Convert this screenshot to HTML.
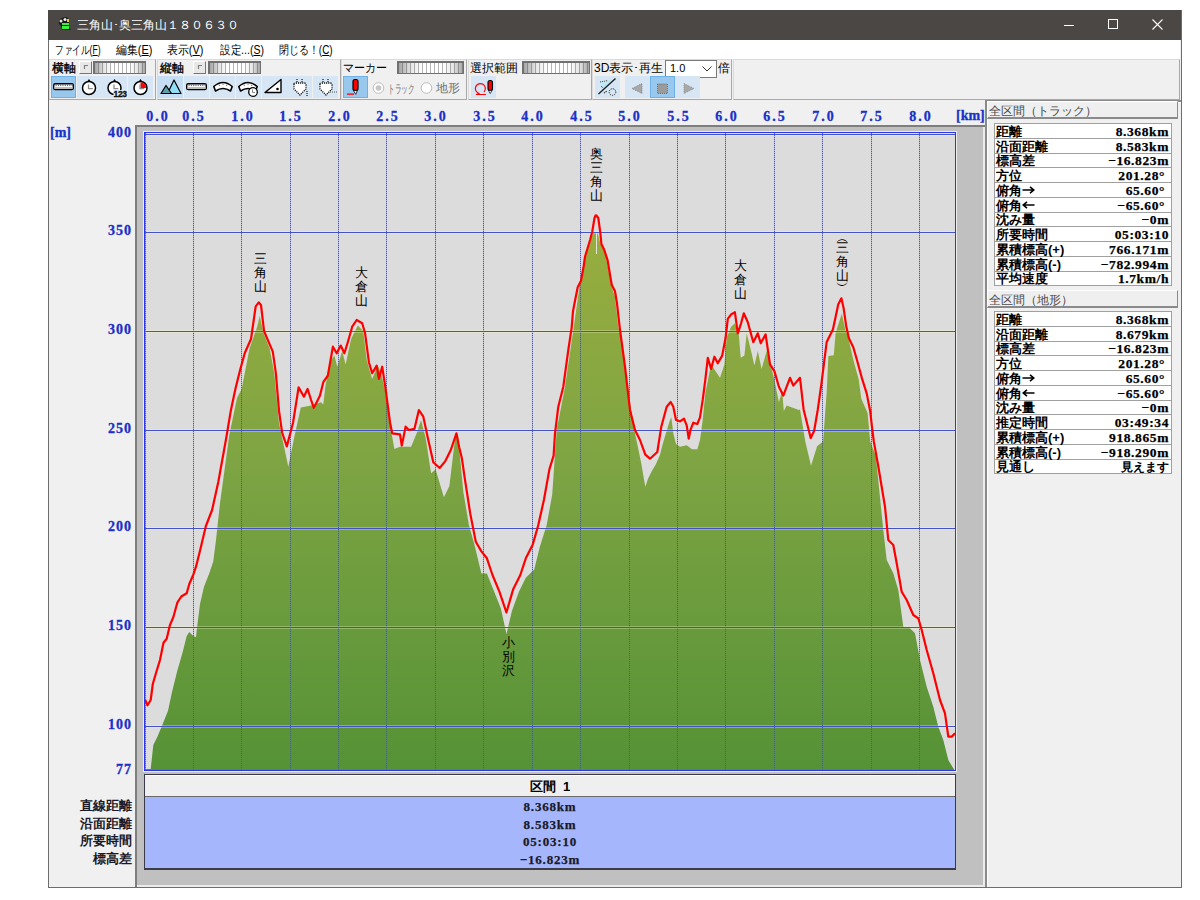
<!DOCTYPE html><html><head><meta charset="utf-8"><style>
*{margin:0;padding:0;box-sizing:border-box}
html,body{width:1200px;height:900px;overflow:hidden;background:#fff}
body{position:relative;font-family:"Liberation Sans",sans-serif;font-size:12px;color:#000}
.a{position:absolute}
.ttl{color:#fff;font-size:12px;white-space:nowrap}
.menu{font-size:12px;white-space:nowrap;color:#000}
.mono{font-family:"Liberation Serif",serif;font-weight:bold;letter-spacing:0.8px;-webkit-text-stroke:0.25px #1a1a2a}
.ax{font-family:"Liberation Serif",serif;font-weight:bold;color:#1a30c8;font-size:14px;letter-spacing:1px;-webkit-text-stroke:0.3px #1a30c8;white-space:nowrap;line-height:14px}
.vt{font-size:13px;line-height:14px;color:#000;white-space:nowrap;text-align:center;width:13px}
.row{position:absolute;left:0;width:177px;height:15px;border-bottom:1px solid #a0a0a0;font-size:13px;line-height:14px;font-weight:bold;white-space:nowrap}
.row .l{position:absolute;left:1px;top:1px}
.row .r{position:absolute;right:3px;top:1px;font-family:"Liberation Serif",serif;font-weight:bold;font-size:13.5px;letter-spacing:0.6px;-webkit-text-stroke:0.25px #000}
.grp{position:absolute;top:59px;height:41px;border:1px solid #dadada;border-bottom-color:#a8a8a8;border-right-color:#a8a8a8}
.btn{position:absolute;top:76px;width:25px;height:22px;background:#d6e6f5}
.sel{background:#99c8ee;border:1px solid #6fb0e6}
.sl{position:absolute;height:13px;border:2px solid #707070;border-bottom-width:1px;border-right-width:1px;background:linear-gradient(90deg,rgba(60,60,60,.45),rgba(60,60,60,.1) 20%,rgba(0,0,0,0) 35%,rgba(0,0,0,0) 70%,rgba(60,60,60,.12) 85%,rgba(60,60,60,.45)),repeating-linear-gradient(90deg,#fdfdfd 0,#fdfdfd 3px,#b4b4b4 3px,#b4b4b4 4px)}
.tlab{position:absolute;top:60px;font-size:12px;white-space:nowrap}
</style></head><body>
<div class="a" style="left:48px;top:10px;width:1134px;height:878px;border:1px solid #6d6d6d;background:#f0f0f0"></div>
<div class="a" style="left:48px;top:10px;width:1133px;height:30px;background:#4a4744"></div>
<div class="a ttl" style="left:77px;top:17px">三角山･奥三角山１８０６３０</div>
<svg class="a" style="left:56px;top:15px" width="18" height="18"><path d="M3 9 Q2 4 6 3 L10 2 L13 4 L13 12 L15 15 L6 15 L5 11 Z" fill="#1a1a1a"/><rect x="6" y="8" width="7" height="2" fill="#3cf03c"/><rect x="6" y="11" width="7" height="3" fill="#3cf03c"/><circle cx="5" cy="6" r="1.5" fill="#ddd"/><circle cx="9" cy="4.5" r="1.5" fill="#eee"/><rect x="11" y="4" width="2" height="3" fill="#e8d020"/></svg>
<div class="a" style="left:1064px;top:25px;width:10px;height:1px;background:#fff"></div>
<div class="a" style="left:1108px;top:19px;width:10px;height:10px;border:1px solid #fff"></div>
<svg class="a" style="left:1152px;top:19px" width="11" height="11"><path d="M0.5 0.5 L10.5 10.5 M10.5 0.5 L0.5 10.5" stroke="#fff" stroke-width="1.1"/></svg>
<div class="a" style="left:49px;top:40px;width:1131px;height:19px;background:#fff"></div>
<div id="menu0" class="a menu" style="left:55px;top:42px;transform:scaleX(0.72);transform-origin:0 0">ファイル(<u>F</u>)</div>
<div id="menu1" class="a menu" style="left:116px;top:42px;transform:scaleX(0.91);transform-origin:0 0">編集(<u>E</u>)</div>
<div id="menu2" class="a menu" style="left:167px;top:42px;transform:scaleX(0.91);transform-origin:0 0">表示(<u>V</u>)</div>
<div id="menu3" class="a menu" style="left:220px;top:42px;transform:scaleX(0.88);transform-origin:0 0">設定...(<u>S</u>)</div>
<div id="menu4" class="a menu" style="left:279px;top:42px;transform:scaleX(0.83);transform-origin:0 0">閉じる！(<u>C</u>)</div>
<div class="grp" style="left:49px;width:107px"></div>
<div class="grp" style="left:157px;width:184px"></div>
<div class="grp" style="left:341px;width:126px"></div>
<div class="grp" style="left:468px;width:124px"></div>
<div class="grp" style="left:592px;width:140px"></div>
<div class="grp" style="left:733px;width:447px"></div>
<div class="tlab" style="left:52px;-webkit-text-stroke:0.35px #000">横軸</div>
<div class="tlab" style="left:160px;-webkit-text-stroke:0.35px #000">縦軸</div>
<div class="tlab" style="left:343px;transform:scaleX(0.92);transform-origin:0 0">マーカー</div>
<div class="tlab" style="left:470px">選択範囲</div>
<div class="tlab" style="left:594px">3D表示･再生</div>
<div class="tlab" style="left:718px">倍</div>
<div class="a" style="left:79px;top:61px;width:13px;height:13px;background:#e8e8e8;border:1px solid #fff;border-right-color:#777;border-bottom-color:#777"></div>
<div class="a" style="left:193px;top:61px;width:13px;height:13px;background:#e8e8e8;border:1px solid #fff;border-right-color:#777;border-bottom-color:#777"></div>
<div class="sl" style="left:93px;top:61px;width:53px"></div>
<div class="sl" style="left:208px;top:61px;width:53px"></div>
<div class="sl" style="left:397px;top:61px;width:67px"></div>
<div class="sl" style="left:522px;top:61px;width:68px"></div>
<div class="a" style="left:665px;top:60px;width:52px;height:18px;background:#fff;border:1px solid #7a7a7a"></div>
<div class="a" style="left:670px;top:62px;font-size:11px">1.0</div>
<svg class="a" style="left:702px;top:66px" width="10" height="6"><path d="M0.5 0.5 L5 5 L9.5 0.5" stroke="#333" fill="none"/></svg>
<div class="btn sel" style="left:51px"></div>
<div class="btn" style="left:77px"></div>
<div class="btn" style="left:102px"></div>
<div class="btn" style="left:128px"></div>
<div class="btn" style="left:158px;background:#c5def3"></div>
<div class="btn" style="left:184px"></div>
<div class="btn" style="left:210px"></div>
<div class="btn" style="left:236px"></div>
<div class="btn" style="left:262px"></div>
<div class="btn" style="left:287px"></div>
<div class="btn" style="left:313px"></div>
<div class="btn sel" style="left:343px"></div>
<div class="btn" style="left:471px"></div>
<div class="btn" style="left:595px"></div>
<div class="btn" style="left:625px"></div>
<div class="btn sel" style="left:650px"></div>
<div class="btn" style="left:675px"></div>
<svg class="a" style="left:0;top:0" width="1200" height="100">
<rect x="53.7" y="83.7" width="19.6" height="5.8" rx="1.5" fill="#fff" stroke="#000" stroke-width="1.4"/><rect x="54.5" y="87" width="18" height="2" fill="#bdbdbd"/><rect x="55.5" y="84.3" width="1.1" height="1.8" fill="#6a6a6a"/><rect x="57.8" y="84.3" width="1.1" height="1.8" fill="#6a6a6a"/><rect x="60.1" y="84.3" width="1.1" height="1.8" fill="#6a6a6a"/><rect x="62.4" y="84.3" width="1.1" height="1.8" fill="#6a6a6a"/><rect x="64.7" y="84.3" width="1.1" height="1.8" fill="#6a6a6a"/><rect x="67.0" y="84.3" width="1.1" height="1.8" fill="#6a6a6a"/><rect x="69.3" y="84.3" width="1.1" height="1.8" fill="#6a6a6a"/><rect x="71.6" y="84.3" width="1.1" height="1.8" fill="#6a6a6a"/>
<circle cx="89" cy="88" r="6.5" fill="#fff" stroke="#000" stroke-width="1.5"/><path d="M87.4 81.2 L90.6 81.2 L89 78.9 Z" fill="#000"/><path d="M88.5 84.5 V88.6 H92.8" stroke="#8a8a8a" fill="none" stroke-width="1.3"/>
<circle cx="114.5" cy="88" r="6.5" fill="#fff" stroke="#000" stroke-width="1.5"/><path d="M112.9 81.2 L116.1 81.2 L114.5 78.9 Z" fill="#000"/><path d="M114.0 84.5 V88.6 H118.3" stroke="#8a8a8a" fill="none" stroke-width="1.3"/>
<rect x="113.5" y="90" width="12" height="7" fill="#d6e6f5"/><text x="113.5" y="97" font-family="Liberation Sans" font-weight="bold" font-size="8.5" fill="#111" stroke="#111" stroke-width="0.3" letter-spacing="-0.3">123</text>
<circle cx="140.5" cy="88" r="6.5" fill="#fff" stroke="#000" stroke-width="1.5"/><path d="M138.9 81.2 L142.1 81.2 L140.5 78.9 Z" fill="#000"/><path d="M140.5 88 L140.5 82.3 A5.7 5.7 0 0 1 146.2 88 Z" fill="#f00"/><path d="M140.0 84.5 V88.6 H144.3" stroke="#8a8a8a" fill="none" stroke-width="1.3"/>
<path d="M167.5 93.5 L174 80 L181 93.5 Z" fill="#90def5" stroke="#000" stroke-width="1.2" stroke-linejoin="round"/>
<path d="M161 93.5 L166 85.5 L171.5 93.5 Z" fill="#5e9fae" stroke="#000" stroke-width="1.2" stroke-linejoin="round"/>
<rect x="186.7" y="83.7" width="19.6" height="5.8" rx="1.5" fill="#fff" stroke="#000" stroke-width="1.4"/><rect x="187.5" y="87" width="18" height="2" fill="#bdbdbd"/><rect x="188.5" y="84.3" width="1.1" height="1.8" fill="#6a6a6a"/><rect x="190.8" y="84.3" width="1.1" height="1.8" fill="#6a6a6a"/><rect x="193.1" y="84.3" width="1.1" height="1.8" fill="#6a6a6a"/><rect x="195.4" y="84.3" width="1.1" height="1.8" fill="#6a6a6a"/><rect x="197.7" y="84.3" width="1.1" height="1.8" fill="#6a6a6a"/><rect x="200.0" y="84.3" width="1.1" height="1.8" fill="#6a6a6a"/><rect x="202.3" y="84.3" width="1.1" height="1.8" fill="#6a6a6a"/><rect x="204.6" y="84.3" width="1.1" height="1.8" fill="#6a6a6a"/>
<path d="M213.8 86.5 Q223.0 78.5 232.2 86.5 L230.5 91 Q223.0 86 215.5 91 Z" fill="#fff" stroke="#000" stroke-width="1.6" stroke-linejoin="round"/><path d="M219 84.5 L219.5 86 M223 83.5 V85 M227 84.5 L226.5 86" stroke="#777" stroke-width="1"/>
<path d="M238.8 86.5 Q248.0 78.5 257.2 86.5 L255.5 91 Q248.0 86 240.5 91 Z" fill="#fff" stroke="#000" stroke-width="1.6" stroke-linejoin="round"/><path d="M244 84.5 L244.5 86 M248 83.5 V85 M252 84.5 L251.5 86" stroke="#777" stroke-width="1"/>
<circle cx="253" cy="92" r="4.3" fill="#fff" stroke="#000" stroke-width="1.3"/><path d="M252.5 89.5 V92.5 H255" stroke="#888" fill="none"/>
<path d="M265 92.5 L281 79.5 L281 92.5 Z" fill="#fff" stroke="#000" stroke-width="1.4" stroke-linejoin="round"/><circle cx="277.5" cy="89" r="1.3" fill="#000"/>
<path d="M294 84 Q294 83 296 83 L304 83 Q306 83 306 85 L306 89 L300 95 L294 89 Z" fill="#fff" stroke="#111" stroke-width="1.3" stroke-dasharray="1.2,0.9"/>
<path d="M297 79 V82 M302 79 V82" stroke="#111" stroke-width="1.2" stroke-dasharray="1,1"/>
<path d="M320 84 Q320 83 322 83 L330 83 Q332 83 332 85 L332 89 L326 95 L320 89 Z" fill="#fff" stroke="#111" stroke-width="1.3" stroke-dasharray="1.2,0.9"/>
<path d="M323 79 V82 M328 79 V82" stroke="#111" stroke-width="1.2" stroke-dasharray="1,1"/>
<path d="M307 91 V96" stroke="#111" stroke-width="1.2" stroke-dasharray="1,1"/>
<path d="M330 92 L337 92" stroke="#555" stroke-dasharray="1,1"/>
<rect x="353" y="79.5" width="5" height="11" rx="2" fill="#f00" stroke="#000" stroke-width="1.2"/><path d="M353.5 90.5 L355.5 94 L357.5 90.5 Z" fill="#fff" stroke="#000" stroke-width="0.8"/><rect x="347" y="93.5" width="7" height="1.3" fill="#f00"/><rect x="355" y="93" width="1.5" height="1.5" fill="#f00"/>
<circle cx="378.5" cy="88" r="5.3" fill="#fff" stroke="#bcbcbc" stroke-width="1"/><circle cx="378.5" cy="88" r="2.8" fill="#c6c6c6"/>
<circle cx="426.5" cy="88" r="5.3" fill="#fff" stroke="#bcbcbc" stroke-width="1"/>
<path d="M484 92 A5 5 0 1 0 479.5 93.5 L476 94.5 L486 94.5" fill="none" stroke="#f00" stroke-width="1.2"/>
<rect x="488" y="80.5" width="4.5" height="10" rx="2" fill="#f00" stroke="#000" stroke-width="1.1"/><path d="M488.5 90.5 L490.2 93.5 L492 90.5 Z" fill="#fff" stroke="#000" stroke-width="0.7"/>
<path d="M600 82 L610 80 L614 81 L603 90 Z" fill="#bfeaf5"/><path d="M598.5 94 L615.5 78.5" stroke="#222" stroke-width="1.4"/><path d="M600 82 L608 80.5 M601 86 L603 88" stroke="#444" stroke-dasharray="1,1"/><circle cx="612.5" cy="92" r="3.3" fill="none" stroke="#222" stroke-dasharray="1.2,1"/><path d="M604 93 L607 91" stroke="#111" stroke-width="1.2" stroke-dasharray="1,1"/>
<path d="M632 88.5 L642 83.5 L642 93.5 Z" fill="#a8a8a8" stroke="#777" stroke-width="0.8" stroke-dasharray="1,1"/>
<rect x="657.5" y="84" width="10" height="9.5" fill="#9a9a9a" stroke="#666" stroke-width="0.8" stroke-dasharray="1,1"/>
<path d="M684 83.5 L694 88.5 L684 93.5 Z" fill="#a8a8a8" stroke="#888" stroke-width="0.8" stroke-dasharray="1,1"/>
<path d="M84.5 69 V65.5 H88" stroke="#808080" stroke-width="1.2" fill="none"/>
<path d="M198.5 69 V65.5 H202" stroke="#808080" stroke-width="1.2" fill="none"/>
</svg>
<div class="a" style="left:388px;top:81px;font-size:12px;color:#6d6d6d;transform:scaleX(0.56);transform-origin:0 0">トラック</div>
<div class="a" style="left:436px;top:80px;font-size:12px;color:#6d6d6d">地形</div>
<div class="a" style="left:135px;top:125px;width:850px;height:762px;background:#c0c0c0;border-top:2px solid #7e7e7e;border-left:2px solid #7e7e7e;box-shadow:inset -2px -2px 0 #ececec"></div>
<div class="a" style="left:985px;top:100px;width:196px;height:787px;background:#f0f0f0;border-left:2px solid #8a8a8a;border-top:2px solid #8a8a8a;box-shadow:inset 1px 1px 0 #fff"></div>
<svg width="1200" height="900" style="position:absolute;left:0;top:0">
<defs><linearGradient id="gg" gradientUnits="userSpaceOnUse" x1="0" y1="215" x2="0" y2="771"><stop offset="0" stop-color="#9aae3e"/><stop offset="0.45" stop-color="#7ea443"/><stop offset="1" stop-color="#559236"/></linearGradient></defs>
<rect x="143" y="131" width="814" height="641" fill="#ececec"/>
<rect x="144" y="132" width="812" height="639" fill="#dcdcdc"/>
<polygon points="145.0,771.0 145.3,769.0 150.7,769.0 153.3,745.0 157.3,737.0 162.7,724.0 168.0,710.7 172.0,692.0 177.3,670.7 182.7,652.0 186.7,636.0 189.3,632.0 193.3,636.0 196.0,637.3 197.3,625.3 200.0,604.0 204.0,586.7 209.3,573.3 213.3,561.3 216.0,540.0 219.9,504.0 229.2,435.6 237.0,398.0 241.7,389.0 249.5,348.4 257.2,326.7 259.7,315.8 263.5,332.9 269.7,348.4 274.3,373.3 279.0,423.0 288.3,466.7 294.6,435.6 300.8,407.6 311.1,405.6 321.1,402.2 323.3,404.4 325.6,384.4 331.1,360.0 334.4,355.6 337.3,366.7 342.2,351.1 345.6,364.4 351.1,338.9 357.8,325.6 363.3,331.1 366.7,360.0 372.2,378.9 377.8,365.6 381.1,373.3 385.6,393.3 390.0,424.4 394.4,448.9 400.0,446.7 411.1,446.7 416.7,433.3 421.1,420.0 425.6,437.8 431.1,473.3 435.6,469.4 443.9,497.2 449.4,486.1 455.0,438.9 457.8,433.3 463.3,491.7 468.9,525.0 474.4,544.4 481.4,573.6 486.9,573.6 495.3,594.4 500.8,608.3 506.5,634.0 511.9,611.1 518.9,591.7 525.8,577.8 534.2,569.4 539.7,547.2 546.7,525.0 552.2,494.4 556.7,430.0 565.0,386.7 573.7,327.3 579.7,284.7 585.0,258.0 590.0,243.0 593.0,233.3 595.7,232.0 597.7,233.3 600.3,243.3 605.0,252.7 607.7,266.0 611.0,284.7 615.0,296.7 618.3,327.3 621.7,340.0 628.3,393.3 635.0,433.3 641.0,462.0 645.3,486.7 648.0,478.7 652.0,470.7 656.0,464.0 660.0,454.7 662.7,444.0 666.7,430.7 670.0,420.0 671.3,417.3 673.3,433.3 676.0,444.0 680.0,446.7 686.7,445.3 692.0,449.3 697.3,449.3 700.0,440.0 702.7,420.0 705.3,393.3 711.1,364.4 720.0,377.8 724.4,364.4 726.7,337.8 731.1,326.7 734.9,323.3 738.9,335.6 740.7,357.8 744.4,355.6 746.7,333.3 751.1,351.1 754.4,365.6 757.8,351.1 761.6,368.9 766.7,351.1 771.1,366.7 774.4,380.0 778.9,402.2 782.2,391.1 783.8,411.1 786.7,405.6 798.9,410.0 800.0,409.4 805.3,441.4 811.0,465.8 817.1,446.3 823.1,441.4 826.7,391.7 828.4,356.0 833.8,355.2 835.6,333.0 841.8,313.4 845.3,329.4 848.0,336.6 853.3,359.7 858.7,379.2 861.3,398.8 867.6,413.0 870.2,441.4 875.8,456.0 883.3,530.0 886.7,560.0 893.3,573.3 898.3,590.0 903.3,626.7 910.0,628.3 915.0,633.3 920.0,660.0 926.7,686.7 933.3,706.7 938.3,726.7 943.3,740.0 948.3,760.0 953.3,768.3 955.0,771.0 955.0,771.0" fill="url(#gg)"/>
<rect x="596" y="233" width="1" height="21" fill="#e4e4d8"/>
<rect x="145" y="133" width="810" height="3" fill="#ffffd8" fill-opacity="0.28"/>
<rect x="144" y="134" width="812" height="1" fill="#4352c8"/>
<rect x="145" y="231" width="810" height="3" fill="#ffffd8" fill-opacity="0.28"/>
<rect x="144" y="232" width="812" height="1" fill="#4352c8"/>
<rect x="145" y="330" width="810" height="3" fill="#ffffd8" fill-opacity="0.28"/>
<rect x="144" y="331" width="812" height="1" fill="#4352c8"/>
<rect x="145" y="429" width="810" height="3" fill="#ffffd8" fill-opacity="0.28"/>
<rect x="144" y="430" width="812" height="1" fill="#4352c8"/>
<rect x="145" y="527" width="810" height="3" fill="#ffffd8" fill-opacity="0.28"/>
<rect x="144" y="528" width="812" height="1" fill="#4352c8"/>
<rect x="145" y="626" width="810" height="3" fill="#ffffd8" fill-opacity="0.28"/>
<rect x="144" y="627" width="812" height="1" fill="#4352c8"/>
<rect x="145" y="725" width="810" height="3" fill="#ffffd8" fill-opacity="0.28"/>
<rect x="144" y="726" width="812" height="1" fill="#4352c8"/>
<line x1="145.5" y1="133" x2="145.5" y2="771" stroke="#5060d0" stroke-opacity="0.35" stroke-width="1"/>
<line x1="145.5" y1="133" x2="145.5" y2="771" stroke="#4656d8" stroke-width="1" stroke-dasharray="1,1"/>
<line x1="193.5" y1="133" x2="193.5" y2="771" stroke="#5060d0" stroke-opacity="0.35" stroke-width="1"/>
<line x1="193.5" y1="133" x2="193.5" y2="771" stroke="#4656d8" stroke-width="1" stroke-dasharray="1,1"/>
<line x1="241.5" y1="133" x2="241.5" y2="771" stroke="#5060d0" stroke-opacity="0.35" stroke-width="1"/>
<line x1="241.5" y1="133" x2="241.5" y2="771" stroke="#4656d8" stroke-width="1" stroke-dasharray="1,1"/>
<line x1="290.5" y1="133" x2="290.5" y2="771" stroke="#5060d0" stroke-opacity="0.35" stroke-width="1"/>
<line x1="290.5" y1="133" x2="290.5" y2="771" stroke="#4656d8" stroke-width="1" stroke-dasharray="1,1"/>
<line x1="338.5" y1="133" x2="338.5" y2="771" stroke="#5060d0" stroke-opacity="0.35" stroke-width="1"/>
<line x1="338.5" y1="133" x2="338.5" y2="771" stroke="#4656d8" stroke-width="1" stroke-dasharray="1,1"/>
<line x1="386.5" y1="133" x2="386.5" y2="771" stroke="#5060d0" stroke-opacity="0.35" stroke-width="1"/>
<line x1="386.5" y1="133" x2="386.5" y2="771" stroke="#4656d8" stroke-width="1" stroke-dasharray="1,1"/>
<line x1="435.5" y1="133" x2="435.5" y2="771" stroke="#5060d0" stroke-opacity="0.35" stroke-width="1"/>
<line x1="435.5" y1="133" x2="435.5" y2="771" stroke="#4656d8" stroke-width="1" stroke-dasharray="1,1"/>
<line x1="483.5" y1="133" x2="483.5" y2="771" stroke="#5060d0" stroke-opacity="0.35" stroke-width="1"/>
<line x1="483.5" y1="133" x2="483.5" y2="771" stroke="#4656d8" stroke-width="1" stroke-dasharray="1,1"/>
<line x1="532.5" y1="133" x2="532.5" y2="771" stroke="#5060d0" stroke-opacity="0.35" stroke-width="1"/>
<line x1="532.5" y1="133" x2="532.5" y2="771" stroke="#4656d8" stroke-width="1" stroke-dasharray="1,1"/>
<line x1="580.5" y1="133" x2="580.5" y2="771" stroke="#5060d0" stroke-opacity="0.35" stroke-width="1"/>
<line x1="580.5" y1="133" x2="580.5" y2="771" stroke="#4656d8" stroke-width="1" stroke-dasharray="1,1"/>
<line x1="629.5" y1="133" x2="629.5" y2="771" stroke="#5060d0" stroke-opacity="0.35" stroke-width="1"/>
<line x1="629.5" y1="133" x2="629.5" y2="771" stroke="#4656d8" stroke-width="1" stroke-dasharray="1,1"/>
<line x1="677.5" y1="133" x2="677.5" y2="771" stroke="#5060d0" stroke-opacity="0.35" stroke-width="1"/>
<line x1="677.5" y1="133" x2="677.5" y2="771" stroke="#4656d8" stroke-width="1" stroke-dasharray="1,1"/>
<line x1="725.5" y1="133" x2="725.5" y2="771" stroke="#5060d0" stroke-opacity="0.35" stroke-width="1"/>
<line x1="725.5" y1="133" x2="725.5" y2="771" stroke="#4656d8" stroke-width="1" stroke-dasharray="1,1"/>
<line x1="774.5" y1="133" x2="774.5" y2="771" stroke="#5060d0" stroke-opacity="0.35" stroke-width="1"/>
<line x1="774.5" y1="133" x2="774.5" y2="771" stroke="#4656d8" stroke-width="1" stroke-dasharray="1,1"/>
<line x1="822.5" y1="133" x2="822.5" y2="771" stroke="#5060d0" stroke-opacity="0.35" stroke-width="1"/>
<line x1="822.5" y1="133" x2="822.5" y2="771" stroke="#4656d8" stroke-width="1" stroke-dasharray="1,1"/>
<line x1="871.5" y1="133" x2="871.5" y2="771" stroke="#5060d0" stroke-opacity="0.35" stroke-width="1"/>
<line x1="871.5" y1="133" x2="871.5" y2="771" stroke="#4656d8" stroke-width="1" stroke-dasharray="1,1"/>
<line x1="919.5" y1="133" x2="919.5" y2="771" stroke="#5060d0" stroke-opacity="0.35" stroke-width="1"/>
<line x1="919.5" y1="133" x2="919.5" y2="771" stroke="#4656d8" stroke-width="1" stroke-dasharray="1,1"/>
<polyline points="145.3,700.0 147.5,705.3 150.7,700.0 152.8,684.0 156.0,673.0 160.0,660.0 163.5,642.7 166.7,638.7 169.9,625.3 173.3,617.3 177.3,602.7 181.3,596.5 186.7,593.3 189.3,584.0 193.3,574.7 196.0,566.7 200.0,550.7 205.9,526.0 212.1,510.0 218.3,482.0 226.1,438.7 230.8,410.7 235.4,389.0 240.1,370.0 244.8,353.0 251.0,339.0 255.7,306.4 258.8,302.4 261.0,305.0 264.1,331.3 272.8,351.6 275.9,373.3 279.0,410.7 282.1,432.5 286.8,446.4 293.0,423.0 298.6,387.3 303.9,396.7 307.6,389.0 311.1,400.0 313.8,407.8 316.7,402.2 320.0,395.6 323.3,382.2 327.8,375.6 332.9,346.7 336.7,353.3 340.7,345.6 344.4,353.3 347.8,342.2 352.2,326.7 356.7,320.0 362.2,323.3 365.1,333.3 368.9,362.2 372.2,373.3 376.7,365.6 378.9,378.9 382.2,366.7 385.6,388.9 390.0,422.2 392.2,433.3 400.0,434.4 401.8,445.6 405.6,426.7 408.9,430.0 414.4,428.9 418.9,410.0 423.3,416.7 427.8,437.8 433.3,462.2 439.7,468.0 445.3,461.1 450.8,450.0 456.4,433.3 459.2,447.2 461.9,458.3 464.7,477.8 470.3,513.9 475.8,541.7 481.4,551.4 486.9,558.3 492.5,575.0 499.4,591.7 506.4,612.5 513.3,588.9 520.3,575.0 525.8,558.3 532.8,544.4 538.3,525.0 543.9,500.0 549.4,469.4 553.6,455.6 555.0,433.3 558.3,406.7 563.3,386.7 568.3,350.0 571.7,327.3 573.0,311.3 575.0,300.7 577.7,287.3 581.0,280.7 583.7,266.0 585.0,256.7 590.3,239.3 592.3,231.3 594.5,218.0 595.7,215.3 596.3,215.3 598.3,218.0 600.3,232.7 601.4,244.0 604.3,250.0 607.7,260.7 609.7,272.7 611.7,284.7 615.0,291.3 617.0,303.3 619.7,327.3 625.0,366.7 630.0,410.0 635.0,430.0 640.0,440.0 645.3,454.7 650.0,458.7 657.3,452.0 661.3,426.7 666.7,406.7 670.7,402.0 673.3,406.7 676.0,420.0 680.0,421.3 684.0,418.7 686.7,425.3 688.7,438.7 690.7,429.3 693.3,422.7 697.3,424.0 700.0,417.3 702.7,400.0 705.3,380.0 707.8,357.8 711.1,368.9 714.4,356.7 717.8,363.3 722.2,355.6 725.6,337.8 727.8,318.9 731.1,314.4 734.9,312.2 737.8,333.3 741.1,323.3 743.8,313.3 747.8,322.2 753.3,342.2 757.8,333.3 760.7,343.3 765.6,334.4 770.0,364.4 774.4,371.1 778.9,386.7 783.3,395.6 790.0,377.8 793.3,385.6 800.0,377.8 803.6,409.4 810.7,437.9 814.2,430.8 817.8,409.4 821.3,384.6 824.9,356.1 826.7,341.9 832.9,329.4 835.6,317.0 838.2,304.6 841.4,298.3 843.6,308.1 846.2,325.9 848.9,338.3 853.3,347.2 856.9,359.7 862.2,379.2 866.7,393.4 870.2,411.2 872.0,427.2 873.8,441.4 878.2,465.8 885.0,506.7 888.3,540.0 893.3,545.0 896.7,563.3 901.7,591.7 906.7,600.0 913.3,615.0 918.3,618.3 921.7,630.0 926.7,650.0 933.3,673.3 940.0,700.0 945.0,713.3 948.3,736.7 951.7,736.7 955.0,733.3" fill="none" stroke="#ff0000" stroke-width="2.2" stroke-linejoin="round"/>
<rect x="144.5" y="132.5" width="811" height="638" fill="none" stroke="#2b35f0" stroke-width="1"/>
</svg>
<div class="a ax" style="left:50px;top:126px;letter-spacing:0">[m]</div>
<div class="a ax" style="right:1068px;top:126px">400</div>
<div class="a ax" style="right:1068px;top:224px">350</div>
<div class="a ax" style="right:1068px;top:323px">300</div>
<div class="a ax" style="right:1068px;top:422px">250</div>
<div class="a ax" style="right:1068px;top:520px">200</div>
<div class="a ax" style="right:1068px;top:619px">150</div>
<div class="a ax" style="right:1068px;top:718px">100</div>
<div class="a ax" style="right:1068px;top:763px">77</div>
<div class="a ax" style="left:142px;top:110px;width:32px;text-align:center;letter-spacing:2px">0.0</div>
<div class="a ax" style="left:178px;top:110px;width:32px;text-align:center;letter-spacing:2px">0.5</div>
<div class="a ax" style="left:227px;top:110px;width:32px;text-align:center;letter-spacing:2px">1.0</div>
<div class="a ax" style="left:275px;top:110px;width:32px;text-align:center;letter-spacing:2px">1.5</div>
<div class="a ax" style="left:324px;top:110px;width:32px;text-align:center;letter-spacing:2px">2.0</div>
<div class="a ax" style="left:372px;top:110px;width:32px;text-align:center;letter-spacing:2px">2.5</div>
<div class="a ax" style="left:420px;top:110px;width:32px;text-align:center;letter-spacing:2px">3.0</div>
<div class="a ax" style="left:469px;top:110px;width:32px;text-align:center;letter-spacing:2px">3.5</div>
<div class="a ax" style="left:517px;top:110px;width:32px;text-align:center;letter-spacing:2px">4.0</div>
<div class="a ax" style="left:566px;top:110px;width:32px;text-align:center;letter-spacing:2px">4.5</div>
<div class="a ax" style="left:614px;top:110px;width:32px;text-align:center;letter-spacing:2px">5.0</div>
<div class="a ax" style="left:663px;top:110px;width:32px;text-align:center;letter-spacing:2px">5.5</div>
<div class="a ax" style="left:711px;top:110px;width:32px;text-align:center;letter-spacing:2px">6.0</div>
<div class="a ax" style="left:759px;top:110px;width:32px;text-align:center;letter-spacing:2px">6.5</div>
<div class="a ax" style="left:808px;top:110px;width:32px;text-align:center;letter-spacing:2px">7.0</div>
<div class="a ax" style="left:856px;top:110px;width:32px;text-align:center;letter-spacing:2px">7.5</div>
<div class="a ax" style="left:905px;top:110px;width:32px;text-align:center;letter-spacing:2px">8.0</div>
<div class="a ax" style="left:956px;top:109px;letter-spacing:0">[km]</div>
<div id="vl0" class="a vt" style="left:254px;top:252px">三<br>角<br>山</div>
<div id="vl1" class="a vt" style="left:355px;top:266px">大<br>倉<br>山</div>
<div id="vl2" class="a vt" style="left:590px;top:147px">奥<br>三<br>角<br>山</div>
<div id="vl3" class="a vt" style="left:502px;top:636px">小<br>別<br>沢</div>
<div id="vl4" class="a vt" style="left:734px;top:259px">大<br>倉<br>山</div>
<div id="vl5" class="a vt" style="left:836px;top:236px"><div style="height:5px;line-height:5px;overflow:visible">︵</div>三<br>角<br>山<div style="height:5px;line-height:5px;overflow:visible">︶</div></div>
<div class="a" style="left:144px;top:774px;width:812px;height:96px;border:1px solid #3a3a4a;border-bottom:2px solid #3c3c48;background:#a6b6fd"></div>
<div class="a" style="left:145px;top:775px;width:810px;height:22px;background:#efefef;border-top:1px solid #fff;border-bottom:1px solid #6a6a6a"></div>
<div class="a" style="left:145px;top:778px;width:810px;text-align:center;font-weight:bold;font-size:13px">区間&nbsp; 1</div>
<div class="a mono" style="left:145px;top:799px;width:810px;text-align:center;font-size:13px;color:#1a1a2a">8.368km</div>
<div class="a" style="right:1068px;top:797px;font-weight:bold;font-size:13px;color:#1a1a2a">直線距離</div>
<div class="a mono" style="left:145px;top:817px;width:810px;text-align:center;font-size:13px;color:#1a1a2a">8.583km</div>
<div class="a" style="right:1068px;top:815px;font-weight:bold;font-size:13px;color:#1a1a2a">沿面距離</div>
<div class="a mono" style="left:145px;top:834px;width:810px;text-align:center;font-size:13px;color:#1a1a2a">05:03:10</div>
<div class="a" style="right:1068px;top:832px;font-weight:bold;font-size:13px;color:#1a1a2a">所要時間</div>
<div class="a mono" style="left:145px;top:852px;width:810px;text-align:center;font-size:13px;color:#1a1a2a">&#8722;16.823m</div>
<div class="a" style="right:1068px;top:850px;font-weight:bold;font-size:13px;color:#1a1a2a">標高差</div>
<div class="a" style="left:987px;top:101px;width:191px;height:18px;background:#efefef;border-top:1px solid #fff;border-left:1px solid #fff;border-bottom:2px solid #8a8a8a;border-right:1px solid #8a8a8a"></div>
<div class="a" style="left:989px;top:103px;font-size:12px;color:#484848">全区間（トラック）</div>
<div class="a" style="left:994px;top:123px;width:178px;height:163px;border:1px solid #a0a0a0;background:#fff">
<div class="row" style="top:0px"><span class="l">距離</span><span class="r">8.368km</span></div>
<div class="row" style="top:15px"><span class="l">沿面距離</span><span class="r">8.583km</span></div>
<div class="row" style="top:29px"><span class="l">標高差</span><span class="r">&#8722;16.823m</span></div>
<div class="row" style="top:44px"><span class="l">方位</span><span class="r">201.28°&nbsp;</span></div>
<div class="row" style="top:59px"><span class="l">俯角<svg width="13" height="10" style="vertical-align:0px"><path d="M0.5 5 H11.5 M8 1.8 L11.8 5 L8 8.2" stroke="#000" stroke-width="1.6" fill="none"/></svg></span><span class="r">65.60°&nbsp;</span></div>
<div class="row" style="top:74px"><span class="l">俯角<svg width="13" height="10" style="vertical-align:0px"><path d="M12.5 5 H1.5 M5 1.8 L1.2 5 L5 8.2" stroke="#000" stroke-width="1.6" fill="none"/></svg></span><span class="r">&#8722;65.60°&nbsp;</span></div>
<div class="row" style="top:88px"><span class="l">沈み量</span><span class="r">&#8722;0m</span></div>
<div class="row" style="top:103px"><span class="l">所要時間</span><span class="r">05:03:10</span></div>
<div class="row" style="top:118px"><span class="l">累積標高(+)</span><span class="r">766.171m</span></div>
<div class="row" style="top:133px"><span class="l">累積標高(-)</span><span class="r">&#8722;782.994m</span></div>
<div class="row" style="top:147px"><span class="l">平均速度</span><span class="r">1.7km/h</span></div>
</div>
<div class="a" style="left:987px;top:290px;width:191px;height:18px;background:#efefef;border-top:1px solid #fff;border-left:1px solid #fff;border-bottom:2px solid #8a8a8a;border-right:1px solid #8a8a8a"></div>
<div class="a" style="left:989px;top:292px;font-size:12px;color:#484848">全区間（地形）</div>
<div class="a" style="left:994px;top:311px;width:178px;height:163px;border:1px solid #a0a0a0;background:#fff">
<div class="row" style="top:0px"><span class="l">距離</span><span class="r">8.368km</span></div>
<div class="row" style="top:15px"><span class="l">沿面距離</span><span class="r">8.679km</span></div>
<div class="row" style="top:29px"><span class="l">標高差</span><span class="r">&#8722;16.823m</span></div>
<div class="row" style="top:44px"><span class="l">方位</span><span class="r">201.28°&nbsp;</span></div>
<div class="row" style="top:59px"><span class="l">俯角<svg width="13" height="10" style="vertical-align:0px"><path d="M0.5 5 H11.5 M8 1.8 L11.8 5 L8 8.2" stroke="#000" stroke-width="1.6" fill="none"/></svg></span><span class="r">65.60°&nbsp;</span></div>
<div class="row" style="top:74px"><span class="l">俯角<svg width="13" height="10" style="vertical-align:0px"><path d="M12.5 5 H1.5 M5 1.8 L1.2 5 L5 8.2" stroke="#000" stroke-width="1.6" fill="none"/></svg></span><span class="r">&#8722;65.60°&nbsp;</span></div>
<div class="row" style="top:88px"><span class="l">沈み量</span><span class="r">&#8722;0m</span></div>
<div class="row" style="top:103px"><span class="l">推定時間</span><span class="r">03:49:34</span></div>
<div class="row" style="top:118px"><span class="l">累積標高(+)</span><span class="r">918.865m</span></div>
<div class="row" style="top:133px"><span class="l">累積標高(-)</span><span class="r">&#8722;918.290m</span></div>
<div class="row" style="top:147px"><span class="l">見通し</span><span class="r"><span style="font-family:Liberation Sans,sans-serif;-webkit-text-stroke:0;letter-spacing:0;font-size:12px">見えます</span></span></div>
</div>
</body></html>
